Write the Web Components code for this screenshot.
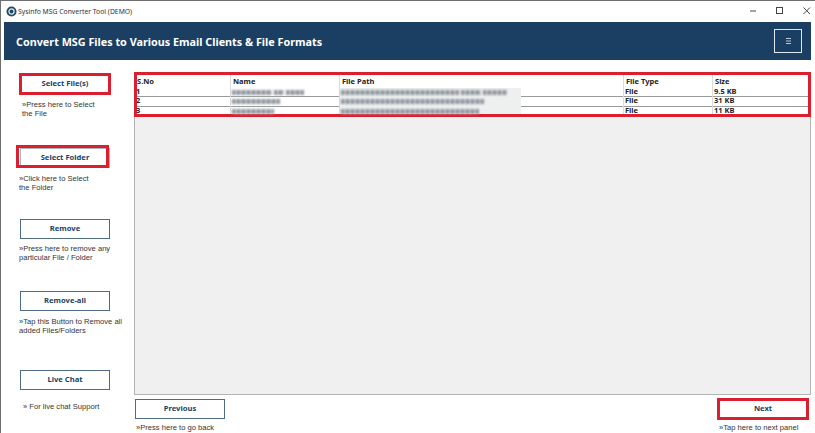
<!DOCTYPE html>
<html>
<head>
<meta charset="utf-8">
<title>Sysinfo MSG Converter Tool (DEMO)</title>
<style>
  html, body { margin: 0; padding: 0; background: #fff; }
  body { width: 815px; height: 433px; overflow: hidden; font-family: "Noto Sans", Tahoma, sans-serif; }
</style>
</head>
<body>
<converter-app></converter-app>

<script>
class TitleBar extends HTMLElement {
  constructor() {
    super();
    this.attachShadow({ mode: 'open' });
    this.shadowRoot.innerHTML = `
      <style>
        :host { display: flex; align-items: center; height: 20px; padding: 0 1px 0 5px; background: #fff; color: #333; }
        .logo { width: 11px; height: 11px; margin-right: 1px; }
        .title { flex: 1; font: 6.8px "Noto Sans", sans-serif; }
        .controls { display: flex; gap: 13px; }
        .controls svg { width: 14px; height: 20px; display: block; }
      </style>
      <svg class="logo" viewBox="0 0 12 12">
        <circle cx="6" cy="6" r="5.5" fill="#234a63"/>
        <circle cx="6" cy="6" r="2.8" fill="none" stroke="#dfe8ee" stroke-width="1.3"/>
        <circle cx="6" cy="6" r="1" fill="#234a63"/>
      </svg>
      <span class="title"><slot></slot></span>
      <div class="controls">
        <svg viewBox="0 0 14 20"><path d="M4 10h6" stroke="#444" fill="none"/></svg>
        <svg viewBox="0 0 14 20"><rect x="3.5" y="6.5" width="6" height="6" stroke="#444" fill="none"/></svg>
        <svg viewBox="0 0 14 20"><path d="M3.5 6.5l6.5 6.5M10 6.5L3.5 13" stroke="#444" fill="none"/></svg>
      </div>
    `;
  }
}

class AppHeader extends HTMLElement {
  constructor() {
    super();
    this.attachShadow({ mode: 'open' });
    this.shadowRoot.innerHTML = `
      <style>
        :host { display: flex; align-items: center; justify-content: space-between; height: 38px; margin: 1px 4px 0 3px; padding: 0 9px 0 12px; background: #1b3f63; color: #fff; font: bold 10.8px "Noto Sans", sans-serif; }
        .menu { box-sizing: border-box; width: 28px; height: 24px; border: 1px solid #dfe8ee; display: flex; align-items: center; justify-content: center; }
        .menu svg { width: 5px; height: 6px; display: block; }
      </style>
      <span><slot></slot></span>
      <div class="menu"><svg viewBox="0 0 5 6"><path d="M0 .5h5M0 3h5M0 5.5h5" stroke="#b9c7d2" stroke-width="1" fill="none"/></svg></div>
    `;
  }
}

class ActionItem extends HTMLElement {
  constructor() {
    super();
    this.attachShadow({ mode: 'open' });
    this.shadowRoot.innerHTML = `
      <style>
        :host { display: block; font: 7.6px/9px "Liberation Sans", sans-serif; color: #333; }
        button { display: block; position: relative; box-sizing: border-box; width: 90px; height: 20px; padding: 0 0 2px; background: #fff; border: 1px solid #4f6a84; border-radius: 0; color: #1b3f63; font: bold 7.6px "Noto Sans", sans-serif; }
        :host([marked]) button { border-color: #aab4bd; }
        :host([marked]) button::after { content: ""; position: absolute; inset: var(--mark-inset, -2px); border: 3px solid #dc1f2e; }
        .note { margin: var(--note-gap, 5px) 0 0 var(--note-indent, -1px); white-space: nowrap; }
      </style>
      <button></button>
      <div class="note"><slot></slot></div>
    `;
  }
  connectedCallback() {
    this.shadowRoot.querySelector('button').textContent = this.getAttribute('label');
  }
}

class FileTable extends HTMLElement {
  constructor() {
    super();
    this.attachShadow({ mode: 'open' });
    const rows = [
      ['1', [40, 10, 18], [118, 20, 24], '9.5 KB'],
      ['2', [48], [143], '31 KB'],
      ['3', [42], [138], '11 KB']
    ];
    const blur = list => list.map(w => `<i style="width:${w}px"></i>`).join('');
    this.shadowRoot.innerHTML = `
      <style>
        :host { display: block; box-sizing: border-box; height: 323px; background: #f0f0f0; border: 1px solid #b4b4b4; font: bold 7.5px "Noto Sans", sans-serif; color: #222; }
        .wrap { background: #fff; outline: 3px solid #dc1f2e; outline-offset: -2px; height: 43px; box-sizing: border-box; overflow: visible; }
        .row { display: grid; grid-template-columns: 95px 109px 284px 89px 1fr; }
        .head { height: 15px; align-items: center; }
        .head span { padding-left: 2px; border-left: 1px solid #dcdcdc; line-height: 16px; }
        .head span:first-child { border-left: 0; }
        .data { height: 8.4px; border-bottom: 1px solid #9a9a9a; line-height: 7.4px; }
        .data:last-child { border-bottom: 0; }
        .data span { border-left: 1px solid #dcdcdc; padding-left: 1px; white-space: nowrap; }
        .data span:first-child { border-left: 0; }
        .data span.path { background: linear-gradient(90deg, #eeefef 0 181px, transparent 181px); height: 9.4px; }
        .fuzzy { display: flex; gap: 2px; align-items: center; height: 9px; }
        .fuzzy i { display: block; height: 5px; background: repeating-linear-gradient(90deg, #8d949a 0 3px, #bcc2c7 3px 5px); filter: blur(.9px); }
      </style>
      <div class="wrap">
        <div class="row head"><span>S.No</span><span>Name</span><span>File Path</span><span>File Type</span><span>Size</span></div>
        ${rows.map(r => `
          <div class="row data">
            <span>${r[0]}</span>
            <span><div class="fuzzy">${blur(r[1])}</div></span>
            <span class="path"><div class="fuzzy">${blur(r[2])}</div></span>
            <span>File</span>
            <span>${r[3]}</span>
          </div>`).join('')}
      </div>
    `;
  }
}

class ConverterApp extends HTMLElement {
  constructor() {
    super();
    this.attachShadow({ mode: 'open' });
    this.shadowRoot.innerHTML = `
      <style>
        :host { display: block; box-sizing: border-box; width: 815px; height: 433px; border-top: 1px solid #6e6e6e; border-left: 1px solid #6e6e6e; background: #fff; }
        .body { display: grid; grid-template-columns: 133px 1fr; margin-top: 12px; }
        .side { display: flex; flex-direction: column; padding-left: 19px; }
        .side action-item { height: 72px; }
        .side action-item:nth-child(1) { height: 74px; margin-top: 2px; --note-indent: 2px; --note-gap: 6px; }
        .side action-item:nth-child(2) { height: 71px; --note-gap: 6px; --mark-inset: -4px 0 -1px -5px; }
        .side action-item:nth-child(3) { --note-gap: 5px; }
        .side action-item:nth-child(4) { height: 79px; --note-gap: 6px; }
        .side action-item:nth-child(5) { --note-indent: 3px; --note-gap: 12px; }
        .main { padding-right: 4px; }
        .foot { display: flex; justify-content: space-between; margin-top: 4px; padding: 0 3px 0 1px; --note-gap: 4px; --note-indent: 1px; }
      </style>
      <title-bar>Sysinfo MSG Converter Tool (DEMO)</title-bar>
      <app-header>Convert MSG Files to Various Email Clients &amp; File Formats</app-header>
      <div class="body">
        <div class="side">
          <action-item label="Select File(s)" marked>»Press here to Select<br>the File</action-item>
          <action-item label="Select Folder" marked>»Click here to Select<br>the Folder</action-item>
          <action-item label="Remove">»Press here to remove any<br>particular File / Folder</action-item>
          <action-item label="Remove-all">»Tap this Button to Remove all<br>added Files/Folders</action-item>
          <action-item label="Live Chat">» For live chat Support</action-item>
        </div>
        <div class="main">
          <file-table></file-table>
          <div class="foot">
            <action-item label="Previous">»Press here to go back</action-item>
            <action-item label="Next" marked>»Tap here to next panel</action-item>
          </div>
        </div>
      </div>
    `;
  }
}

customElements.define('title-bar', TitleBar);
customElements.define('app-header', AppHeader);
customElements.define('action-item', ActionItem);
customElements.define('file-table', FileTable);
customElements.define('converter-app', ConverterApp);
</script>
</body>
</html>
